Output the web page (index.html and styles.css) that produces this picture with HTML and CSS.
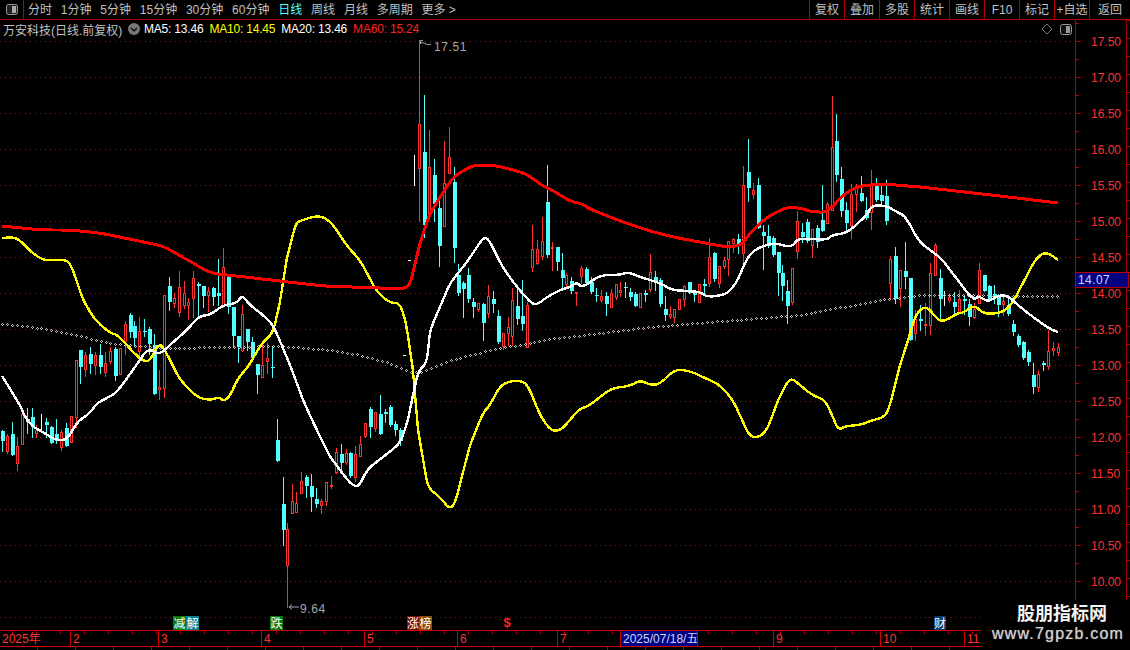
FILE: index.html
```html
<!doctype html>
<html lang="zh-CN">
<head>
  <meta charset="UTF-8" />
  <title>万安科技 日线</title>
  <link rel="stylesheet" href="styles.css">
</head>
<body>
  <!-- Top toolbar -->
  <div class="toolbar">
    <div class="panel-btn">
      <svg class="panel-icon" viewBox="0 0 12 11"><rect x="0.5" y="0.5" width="11" height="10" rx="2" fill="#222" stroke="#999"/><rect x="6" y="2" width="4" height="7" fill="#aaa"/></svg>
    </div>
    <div class="periods">
      <span>分时</span><span>1分钟</span><span>5分钟</span><span>15分钟</span><span>30分钟</span><span>60分钟</span>
      <span class="active">日线</span><span>周线</span><span>月线</span><span>多周期</span><span>更多 &gt;</span>
    </div>
    <div class="actions">
      <span>复权</span><span>叠加</span><span>多股</span><span>统计</span><span>画线</span><span>F10</span><span>标记</span><span>+自选</span><span>返回</span>
    </div>
  </div>

  <div class="main">
    <!-- Candles, averages and grid are drawn into this svg by chart.js -->
    <div class="chart-pane">
      <svg id="chart" class="chart" viewBox="0 20 1075 610"></svg>
      <div class="legend">
        <span class="stock">万安科技(日线.前复权)</span>
        <svg class="legend-toggle" viewBox="0 0 12 12"><circle cx="6" cy="6" r="6" fill="#777"/><path d="M3 5l3 3 3-3" fill="none" stroke="#111" stroke-width="1.5"/></svg>
        <span class="ma-white">MA5: 13.46</span>
        <span class="ma-yellow">MA10: 14.45</span>
        <span class="ma-white">MA20: 13.46</span>
        <span class="ma-red">MA60: 15.24</span>
        <svg class="legend-diamond" viewBox="0 0 12 12"><path d="M6 1l5 5-5 5-5-5z" fill="none" stroke="#777"/></svg>
        <svg class="legend-panel" viewBox="0 0 12 11"><rect x="0.5" y="0.5" width="11" height="10" rx="2" fill="#111" stroke="#999"/><rect x="6" y="2" width="4" height="7" fill="#999"/></svg>
      </div>
    </div>

    <!-- Price axis -->
    <div class="axis">
      <div class="axis-labels">
        <div class="tick">17.50</div><div class="tick">17.00</div><div class="tick">16.50</div><div class="tick">16.00</div>
        <div class="tick">15.50</div><div class="tick">15.00</div><div class="tick">14.50</div><div class="tick">14.00</div>
        <div class="tick">13.50</div><div class="tick">13.00</div><div class="tick">12.50</div><div class="tick">12.00</div>
        <div class="tick">11.50</div><div class="tick">11.00</div><div class="tick">10.50</div><div class="tick">10.00</div>
      </div>
      <div class="axis-strip"></div>
      <div class="last-price">14.07</div>
    </div>
  </div>

  <!-- Date bar -->
  <div class="date-bar">
    <span>2025年</span><span>2</span><span>3</span><span>4</span><span>5</span><span>6</span><span>7</span>
    <span class="date-current">2025/07/18/五</span><span class="no-mark"></span>
    <span>9</span><span>10</span><span>11</span>
  </div>
  <div class="tab-row">
    <i></i><i></i><i></i><i></i><i></i><i></i><i></i><i></i><i></i><i></i><i></i><i></i><i></i><i></i><i></i><i></i><i></i><i></i><i></i><i></i><i></i><i></i><i></i><i></i><i></i><i></i>
  </div>

  <!-- Site watermark sits over the corner of the chart -->
  <div class="watermark">
    <div class="wm-name">股朋指标网</div>
    <div class="wm-url">www.7gpzb.com</div>
  </div>

  <script src="chart.js"></script>
</body>
</html>
```
FILE: styles.css
```css
body, html {
  margin: 0;
  padding: 0;
  width: 1130px;
  height: 650px;
  overflow: hidden;
  background: #000;
  font-family: "Liberation Sans", "Noto Sans CJK SC", sans-serif;
  font-size: 12px;
  color: #c0c0c0;
}
body {
  position: relative;
}
/* Toolbar */
.toolbar {
  display: flex;
  height: 19px;
  line-height: 20px;
  border-bottom: 1px solid #b40000;
}
.panel-btn {
  width: 23px;
  border-right: 1px solid #b40000;
  display: flex;
  align-items: center;
  justify-content: center;
}
.panel-icon {
  width: 12px;
  height: 11px;
}
.periods {
  display: flex;
  gap: 8.8px;
  padding-left: 4px;
}
.periods .active {
  color: #54ffff;
}
.actions {
  display: flex;
  margin-left: auto;
}
.actions span {
  width: 34px;
  border-left: 1px solid #b40000;
  text-align: center;
}
.actions span:last-child {
  width: 40px;
}
/* Chart + axis */
.main {
  display: flex;
  height: 610px;
}
.chart-pane {
  position: relative;
  width: 1075px;
}
.chart {
  position: absolute;
  left: 0;
  top: 0;
  width: 1075px;
  height: 610px;
}
.legend {
  position: relative;
  display: flex;
  align-items: center;
  height: 18px;
  padding-left: 3px;
  white-space: nowrap;
}
.stock {
  width: 125px;
}
.legend-toggle {
  width: 12px;
  height: 12px;
  margin-right: 4px;
}
.legend span + span,
.legend svg + span {
  margin-right: 6px;
  letter-spacing: -0.2px;
}
.ma-white {
  color: #fff;
}
.ma-yellow {
  color: #ff0;
}
.ma-red {
  color: #ff2020;
}
.legend-diamond {
  width: 12px;
  height: 12px;
  margin-left: auto;
  margin-right: 7px;
}
.legend-panel {
  width: 12px;
  height: 11px;
  margin-right: 3px;
}
.axis {
  position: relative;
  display: flex;
  width: 54px;
  border-left: 1px solid #b40000;
}
.axis-labels {
  width: 51px;
  padding-top: 3px;
}
.tick {
  position: relative;
  height: 36px;
  line-height: 38px;
  padding-left: 15px;
  color: #ff3232;
}
.tick::before {
  content: "";
  position: absolute;
  left: 0;
  top: 18px;
  width: 5px;
  height: 1px;
  background: #b40000;
}
.tick::after {
  content: "";
  position: absolute;
  left: 0;
  top: 0;
  width: 3px;
  height: 1px;
  background: #b40000;
}
.axis-strip {
  width: 3px;
  border-left: 1px solid #a00000;
  background: repeating-linear-gradient(to bottom, #a00000 0, #a00000 1px, transparent 1px, transparent 18px);
}
.last-price {
  position: absolute;
  left: 0;
  top: 252px;
  width: 50px;
  height: 14px;
  line-height: 14px;
  padding-left: 2px;
  box-sizing: content-box;
  background: #000080;
  border: 1px solid #b40000;
  border-left: 0;
  color: #c8d8ff;
  font-size: 12px;
  letter-spacing: 0.4px;
}
/* Date bar */
.date-bar {
  display: grid;
  grid-template-columns: 70px 88px 103px 103px 93px 100px 63px 78px 75px 107px 84px 20px 146px;
  height: 15px;
  line-height: 16px;
  border-top: 1px solid #d00000;
  border-bottom: 1px solid #d00000;
  color: #ff3232;
  background: repeating-linear-gradient(to right, #b40000 0, #b40000 1px, transparent 1px, transparent 24px) 12px 0 / 100% 3px no-repeat;
}
.date-bar span {
  padding-left: 2px;
  border-left: 1px solid #d00000;
  overflow: hidden;
  white-space: nowrap;
}
.date-bar span:first-child {
  border-left: 0;
}
.date-bar .no-mark {
  border-left: 0;
}
.date-bar .date-current {
  background: #000080;
  color: #c8d8ff;
  border-right: 1px solid #d00000;
}
.tab-row {
  display: flex;
  height: 3px;
}
.tab-row i {
  width: 37px;
  border-right: 1px solid #b40000;
}
/* Watermark */
.watermark {
  position: absolute;
  left: 982px;
  top: 600px;
  width: 148px;
  height: 50px;
  background: #000;
  text-align: center;
}
.wm-name {
  height: 26px;
  line-height: 29px;
  padding-left: 12px;
  font-size: 18px;
  font-weight: bold;
  color: #f4f4f4;
}
.wm-url {
  padding-left: 4px;
  line-height: 16px;
  font-size: 16px;
  letter-spacing: 1.2px;
  color: #cfcfcf;
  text-shadow: 0 0 1px #aaa;
  white-space: nowrap;
}
/* Chart pieces */
.grid-line {
  stroke: #8c2020;
  stroke-dasharray: 1 4;
  shape-rendering: crispEdges;
}
.candles,
.ma-dots {
  shape-rendering: crispEdges;
}
.wick-c {
  stroke: #54ffff;
}
.wick-r {
  stroke: #ff3232;
}
.wick-w {
  stroke: #fff;
}
.body-c {
  fill: #54ffff;
}
.body-r {
  fill: #000;
  stroke: #ff3232;
}
.body-w {
  fill: #fff;
}
.avg {
  fill: none;
  stroke-width: 2.4;
  stroke-linejoin: round;
  shape-rendering: crispEdges;
}
.avg-white {
  stroke: #fff;
}
.avg-yellow {
  stroke: #ff0;
}
.avg-red {
  stroke: #f00;
  stroke-width: 3;
}
.ma-dots {
  fill: #c4c4c4;
}
.price-note {
  fill: #a8a8a8;
  font-size: 12px;
  letter-spacing: 0.6px;
}
.note-arrow {
  fill: none;
  stroke: #a8a8a8;
}
.tag-text {
  fill: #fff;
  font-size: 12px;
  text-anchor: middle;
}
.tag-money {
  fill: #ff2020;
  font-size: 13px;
  font-weight: bold;
  text-anchor: middle;
}
```
FILE: chart.js
```js
const NS = 'http://www.w3.org/2000/svg';
const svg = document.getElementById('chart');

function add(parent, name, attrs, text) {
  const el = document.createElementNS(NS, name);
  for (const k in attrs) el.setAttribute(k, attrs[k]);
  if (text) el.textContent = text;
  parent.appendChild(el);
  return el;
}

// grid: one dotted line every 0.50 from 17.50 down to 9.50
for (let i = 0; i <= 16; i++) {
  const y = 41.5 + i * 36;
  add(svg, 'line', { class: 'grid-line', x1: 0, x2: 1075, y1: y, y2: y });
}

// candles as measured: [x, high, top, bottom, low, kind], scaled 3x from an origin
const batches = [
  { ox: 0, oy: 230, rows: [
    [7,600,603,633,662,'c'],[22,612,618,662,670,'r'],[37,576,612,675,675,'c'],[52,622,648,698,720,'r'],
    [67,552,552,642,642,'r'],[80,535,568,575,610,'c'],[95,533,560,590,620,'c'],[109,585,600,608,622,'r'],
    [124,552,552,552,600,'w'],[139,563,576,584,622,'c'],[154,587,590,638,640,'c'],[169,568,612,632,640,'c'],
    [184,600,606,652,660,'r'],[199,580,595,648,648,'c'],[214,558,558,635,635,'r'],[229,390,390,562,590,'r'],
    [241,360,360,410,458,'c'],[256,365,375,416,438,'r'],[271,352,373,402,428,'c'],[286,365,375,405,432,'r'],
    [301,343,375,412,428,'c'],[316,365,400,426,438,'r'],[331,350,363,392,398,'r'],[346,350,357,438,450,'c'],
    [361,355,355,432,432,'r'],[376,272,282,332,372,'r'],[391,250,255,305,322,'c'],[403,272,288,325,345,'c'],
    [418,262,303,362,375,'r'],[433,268,302,304,318,'c'],[448,292,298,342,372,'c'],[463,312,345,492,492,'c'],
    [478,420,472,476,506,'r'],[493,195,195,475,500,'r'],[508,142,168,216,240,'c'],[523,190,205,218,232,'r'],
    [538,124,172,246,258,'r'],[553,153,190,226,235,'r'],[565,205,216,224,266,'r'],[580,124,145,205,262,'r'],
    [595,155,163,167,255,'c'],[610,168,168,198,230,'c'],[625,170,183,195,243,'r'],[640,172,175,200,226,'c'],
    [655,88,188,198,225,'c'],[670,55,112,226,230,'r'],[685,138,138,232,248,'c'],[700,230,230,318,348,'c'],
    [715,318,318,352,396,'c'],[727,225,252,360,362,'r'],[742,298,298,336,360,'c'],[757,322,336,385,392,'c'],
    [772,402,402,434,490,'c'],[787,340,405,440,440,'r'],[802,340,385,392,430,'r'],[817,350,411,413,440,'c'],
    [832,567,630,692,692,'c']
  ] },
  { ox: 260, oy: 400, rows: [
    [68,232,312,390,434,'c'],[82,370,388,494,620,'r'],[97,252,304,338,338,'r'],[109,276,309,336,336,'r'],
    [124,216,243,278,278,'r'],[139,225,231,258,290,'c'],[154,222,258,291,332,'c'],[169,265,297,312,320,'c'],
    [184,298,304,314,338,'r'],[199,246,246,302,314,'r'],[214,228,256,258,264,'r'],[229,145,156,216,220,'r'],
    [244,132,162,190,218,'c'],[259,148,159,187,192,'r'],[271,155,159,229,230,'c'],[286,138,163,230,242,'r'],
    [301,108,132,167,167,'r'],[316,70,70,107,112,'r'],[331,20,26,80,110,'c'],[346,36,36,83,92,'r'],
    [361,-15,42,102,102,'c'],[376,28,36,42,66,'c'],[391,15,20,76,78,'c'],[406,62,72,90,105,'c'],[421,85,90,122,135,'c']
  ] },
  { ox: 280, oy: 30, rows: [
    [403,375,375,375,465,'w'],[418,30,283,415,572,'r'],[433,195,365,585,620,'c'],[448,300,412,555,555,'r'],
    [463,387,435,522,572,'c'],[478,507,535,648,707,'c'],[493,333,460,587,587,'r'],[508,292,382,428,428,'r'],
    [523,412,457,653,695,'c'],[535,702,735,790,795,'c'],[550,752,760,777,862,'c'],[565,715,735,807,815,'c'],
    [580,805,817,832,860,'c'],[595,820,820,836,842,'r'],[610,820,823,878,930,'c'],[625,766,798,848,860,'r'],
    [640,783,807,822,845,'c'],[655,840,858,936,938,'c'],[670,908,910,948,958,'r'],[685,862,892,908,945,'r'],
    [697,775,810,917,945,'r'],[712,778,828,866,882,'c'],[727,750,858,882,900,'c'],[742,815,825,952,952,'r'],
    [757,585,658,712,722,'r'],[772,630,658,700,702,'r'],[787,560,633,678,688,'r'],[802,405,516,676,682,'c']
  ] },
  { ox: 550, oy: 170, rows: [
    [7,216,232,232,300,'r'],[22,232,232,275,300,'c'],[37,250,300,324,355,'c'],[49,308,316,342,355,'r'],
    [64,320,333,362,368,'c'],[79,365,365,368,405,'r'],[94,288,295,318,340,'r'],[109,290,297,338,340,'c'],
    [124,320,336,367,368,'c'],[139,354,376,378,392,'c'],[154,360,378,390,396,'r'],[169,365,378,402,435,'c'],
    [184,357,370,410,410,'r'],[199,342,342,380,386,'r'],[211,335,361,365,378,'r'],[226,336,350,352,382,'c'],
    [241,355,366,382,390,'c'],[256,366,372,408,408,'c'],[271,370,370,410,410,'r'],[286,360,370,374,393,'c'],
    [301,252,307,358,362,'r'],[316,303,321,333,360,'c'],[331,325,330,402,408,'c'],[346,378,417,435,450,'c'],
    [361,407,432,438,444,'r'],[373,417,418,440,456,'r'],[388,387,387,416,416,'r'],[403,345,348,386,408,'r'],
    [418,336,336,370,370,'c'],[433,364,370,374,393,'c'],[448,343,343,395,395,'r'],[463,327,342,348,376,'c']
  ] },
  { ox: 700, oy: 90, rows: [
    [28,445,502,578,588,'r'],[43,485,488,568,572,'c'],[58,528,529,578,590,'r'],[73,500,510,528,535,'r'],
    [85,452,452,508,555,'r'],[100,445,447,458,486,'r'],[115,433,447,464,490,'c'],[130,228,286,488,515,'r'],
    [145,148,246,294,332,'c'],[160,278,300,312,324,'r'],[175,265,285,414,415,'c'],[190,405,426,437,537,'c'],
    [205,405,437,468,470,'c'],[220,438,445,496,498,'c'],[235,486,486,548,615,'c'],[247,525,548,588,630,'c'],
    [262,570,603,648,698,'c'],[277,534,534,636,642,'r'],[292,363,393,482,504,'r'],[307,400,426,442,456,'c'],
    [322,388,396,454,456,'c'],[337,418,418,464,500,'r'],[352,405,414,456,470,'c'],[367,285,390,422,424,'c'],
    [382,336,342,398,398,'r'],[397,18,172,360,360,'r'],[409,72,153,255,272,'c'],[424,232,267,362,378,'c'],
    [439,335,360,398,426,'c'],[454,282,312,404,443,'r'],[469,282,294,312,362,'r'],[484,258,308,332,332,'c'],
    [499,322,360,384,386,'c'],[514,240,278,367,416,'r'],[529,265,284,330,332,'c'],[544,285,315,332,346,'c'],
    [559,270,318,392,402,'c']
  ] },
  { ox: 880, oy: 220, rows: [
    [31,108,118,188,238,'r'],[46,80,108,238,248,'c'],[61,150,150,205,258,'r'],[76,66,154,172,205,'c'],
    [91,174,174,360,360,'c'],[106,270,298,340,360,'r'],[121,255,298,302,330,'c'],[136,248,312,316,345,'r'],
    [151,130,160,316,342,'r'],[166,68,74,166,166,'r'],[181,148,174,236,300,'c'],[193,212,212,212,254,'w'],
    [208,222,232,240,246,'r'],[223,215,245,262,285,'c'],[238,210,236,278,278,'r'],[253,228,236,242,282,'c'],
    [268,236,252,290,315,'c'],[283,250,268,292,295,'r'],[298,128,150,250,250,'r'],[313,165,165,212,212,'c'],
    [328,195,198,236,240,'c'],[343,195,222,230,250,'c'],[355,222,230,256,288,'c'],[370,235,243,252,285,'r'],
    [385,238,255,282,285,'c'],[400,300,312,336,345,'c'],[415,342,348,374,378,'c'],[430,362,366,414,416,'c'],
    [445,390,396,425,436,'c'],[460,430,464,500,518,'c'],[475,450,462,502,512,'r'],[490,424,428,434,450,'c'],
    [505,330,392,438,446,'r'],[518,365,384,390,404,'r'],[533,370,382,396,405,'r']
  ] }
];

const candles = add(svg, 'g', { class: 'candles' });
batches.forEach(b => {
  b.rows.forEach(r => {
    const x = Math.round(b.ox + r[0] / 3);
    const ys = r.slice(1, 5).map(v => Math.round(b.oy + v / 3));
    const kind = r[5];
    add(candles, 'line', { class: 'wick-' + kind, x1: x + 0.5, x2: x + 0.5, y1: ys[0], y2: ys[3] + 1 });
    if (kind === 'c') {
      add(candles, 'rect', { class: 'body-c', x: x - 1, y: ys[1], width: 4, height: Math.max(ys[2] - ys[1], 1) });
    } else if (kind === 'r') {
      add(candles, 'rect', { class: 'body-r', x: x - 0.5, y: ys[1] + 0.5, width: 2, height: Math.max(ys[2] - ys[1], 1) });
    }
  });
});
// two flat days before the jump
add(candles, 'rect', { class: 'body-w', x: 403, y: 355, width: 3, height: 1 });
add(candles, 'rect', { class: 'body-w', x: 408, y: 260, width: 3, height: 1 });

// averages, page coordinates
const dots = [[2,324],[33,327],[67,333],[97,340],[123,345],[167,348],[227,347],[280,346],[330,350],[360,355],[392,364],[412,372],[420,372],[445,362],[470,355],[500,348],[530,343],[550,339],[583,335],[617,331],[650,327],[710,322],[800,315],[880,300],[920,295],[1060,296]];
const red = [[2,226],[42,230],[70,230],[100,233],[163,246],[177,254],[193,263],[210,273],[227,275],[280,281],[323,286],[409,289],[420,243],[430,213],[453,177],[473,165],[493,165],[525,173],[543,186],[550,189],[560,195],[570,201],[582,204],[590,209],[610,217],[623,222],[650,231],[673,237],[710,244],[728,247],[742,245],[750,233],[767,217],[787,207],[800,208],[813,212],[828,212],[843,195],[858,186],[883,184],[920,187],[1000,196],[1058,203]];
const yellow = [[2,238],[17,237],[32,253],[45,261],[67,259],[73,270],[83,300],[95,320],[110,333],[118,335],[133,352],[143,361],[150,361],[159,343],[165,350],[180,380],[198,398],[212,400],[218,397],[224,401],[230,396],[238,378],[248,367],[262,343],[273,333],[280,302],[287,257],[296,223],[302,220],[320,215],[332,223],[347,246],[360,260],[377,292],[390,303],[400,303],[406,323],[413,370],[418,430],[428,488],[440,497],[450,510],[456,500],[470,445],[483,413],[490,405],[500,386],[510,381],[525,381],[532,395],[540,415],[550,430],[560,431],[570,420],[578,410],[590,405],[600,397],[612,388],[630,386],[640,380],[650,385],[660,384],[675,369],[690,371],[705,378],[720,385],[733,400],[742,420],[750,437],[760,437],[768,428],[778,400],[790,377],[800,385],[812,395],[825,400],[832,415],[838,430],[846,426],[860,425],[870,421],[885,417],[890,405],[900,365],[905,350],[915,317],[920,310],[925,307],[930,310],[938,320],[945,321],[958,313],[963,313],[974,305],[983,313],[993,314],[1005,311],[1013,302],[1023,283],[1035,260],[1043,253],[1050,254],[1058,260]];
const white = [[2,376],[20,405],[25,417],[33,427],[43,432],[55,440],[67,440],[77,422],[90,413],[97,403],[107,398],[117,392],[133,370],[148,348],[159,355],[170,345],[187,330],[199,316],[210,315],[223,305],[237,303],[242,295],[250,305],[263,315],[273,325],[280,341],[292,370],[303,400],[313,422],[330,457],[350,483],[355,486],[359,486],[367,470],[375,463],[400,444],[408,420],[413,395],[418,372],[427,362],[430,330],[443,300],[450,283],[467,262],[483,238],[488,238],[503,268],[517,287],[532,304],[538,304],[547,297],[560,290],[570,287],[577,282],[582,288],[600,275],[620,275],[628,272],[640,277],[660,283],[672,290],[688,291],[700,292],[707,297],[723,295],[730,291],[738,280],[745,262],[753,251],[763,246],[775,243],[785,246],[793,246],[798,238],[827,240],[832,235],[847,233],[867,215],[872,205],[887,206],[897,212],[905,216],[920,243],[940,257],[950,270],[973,300],[979,296],[988,302],[997,296],[1007,295],[1020,307],[1037,320],[1050,329],[1058,332]];

// round the corners a little without moving the measured points much
function soften(points, rounds) {
  let out = points;
  for (let n = 0; n < rounds; n++) {
    const next = [out[0]];
    for (let i = 0; i < out.length - 1; i++) {
      const a = out[i], b = out[i + 1];
      const len = Math.hypot(b[0] - a[0], b[1] - a[1]);
      const t = Math.min(0.25, 5 / (len || 1));
      next.push([a[0] + (b[0] - a[0]) * t, a[1] + (b[1] - a[1]) * t]);
      next.push([b[0] - (b[0] - a[0]) * t, b[1] - (b[1] - a[1]) * t]);
    }
    next.push(out[out.length - 1]);
    out = next;
  }
  return out;
}

const pts = a => soften(a, 2).map(p => p[0].toFixed(1) + ',' + p[1].toFixed(1)).join(' ');

// the slow average is a row of tiny hollow diamonds, one per trading day
function dotPath(points) {
  let d = '';
  for (let x = 2; x < 1060; x += 4.93) {
    let i = 0;
    while (i < points.length - 2 && points[i + 1][0] < x) i++;
    const a = points[i], b = points[i + 1];
    const y = Math.round(a[1] + (b[1] - a[1]) * (x - a[0]) / (b[0] - a[0]));
    const px = Math.round(x);
    [[0, -1], [-1, 0], [1, 0], [0, 1]].forEach(o => {
      d += 'M' + (px + o[0]) + ' ' + (y + o[1]) + 'h1v1h-1z';
    });
  }
  return d;
}
add(svg, 'path', { class: 'ma-dots', d: dotPath(dots) });
add(svg, 'polyline', { class: 'avg avg-yellow', points: pts(yellow) });
add(svg, 'polyline', { class: 'avg avg-white', points: pts(white) });
add(svg, 'polyline', { class: 'avg avg-red', points: pts(red) });

// high / low notes
add(svg, 'path', { class: 'note-arrow', d: 'M420.5 44V40.5H423M421 42.5q3 0 5 1.500t5 0' });
add(svg, 'text', { class: 'price-note', x: 434, y: 51 }, '17.51');
add(svg, 'path', { class: 'note-arrow', d: 'M299 607H289l3-2.500M289 607l3 2.500' });
add(svg, 'text', { class: 'price-note', x: 300, y: 613 }, '9.64');

// event tags above the date bar
const tags = [
  [173, 13, '#0a7a0a', '减'], [186, 13, '#0a7f90', '解'], [270, 13, '#0a7a0a', '跌'],
  [407, 12, '#7a0a0a', '涨'], [419, 13, '#8a4a0a', '榜'], [934, 12, '#0a3a70', '财']
];
tags.forEach(t => {
  add(svg, 'rect', { x: t[0], y: 616, width: t[1], height: 14, fill: t[2] });
  add(svg, 'text', { class: 'tag-text', x: t[0] + t[1] / 2, y: 627.5 }, t[3]);
});
add(svg, 'text', { class: 'tag-money', x: 507, y: 627 }, '$');
```
